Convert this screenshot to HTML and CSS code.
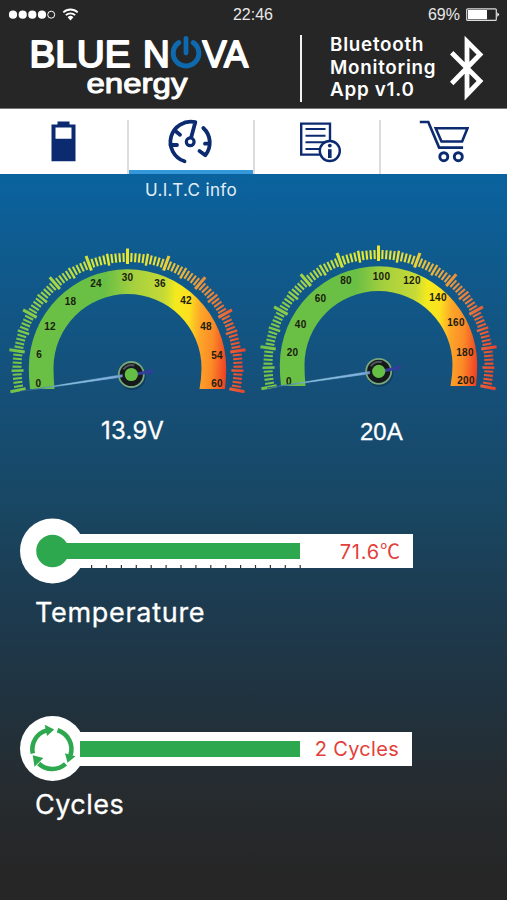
FILE: index.html
```
<!DOCTYPE html>
<html lang="en">
<head>
    <meta charset="UTF-8">
    <meta name="viewport" content="width=device-width, initial-scale=1.0">
    <title>Blue Nova Energy</title>
    <link rel="stylesheet" href="styles.css">
</head>
<body>
    <header class="header">
        <div class="status">
            <svg class="signal" width="72" height="16" viewBox="8 7 72 16">
                <g fill="#fff">
                    <circle cx="13" cy="14.7" r="4.1"/>
                    <circle cx="22.7" cy="14.7" r="4.1"/>
                    <circle cx="32.3" cy="14.7" r="4.1"/>
                    <circle cx="42" cy="14.7" r="4.1"/>
                    <path d="M67.6 17.2a4.2 4.2 0 0 1 5.8 0L70.5 20.4z"/>
                </g>
                <g fill="none" stroke="#fff">
                    <circle cx="51.2" cy="14.7" r="3.5" stroke-width="1"/>
                    <path d="M63.3 12.4a10.4 10.4 0 0 1 14.4 0" stroke-width="1.8"/>
                    <path d="M65.8 15.2a6.8 6.8 0 0 1 9.4 0" stroke-width="1.8"/>
                </g>
            </svg>
            <span class="time">22:46</span>
            <div class="power">
                <span>69%</span>
                <svg width="34" height="13" viewBox="466 8 34 13">
                    <rect x="466.7" y="8.8" width="29.6" height="11.6" rx="1" fill="none" stroke="#ddd" stroke-width="1.2"/>
                    <rect x="468" y="10" width="19" height="9.2" fill="#fff"/>
                    <path d="M497.3 12.3l2 2.3-2 2.3z" fill="#fff"/>
                </svg>
            </div>
        </div>
        <div class="brand">
            <svg class="logo" width="226" height="70" viewBox="26 34 226 70">
                <g class="logo-text">
                    <text class="logo-big" x="29.5" y="66.5" textLength="101" lengthAdjust="spacingAndGlyphs">BLUE</text>
                    <text class="logo-big" x="143" y="66.5">N</text>
                    <text class="logo-big" x="202.5" y="66.5" textLength="45.5" lengthAdjust="spacingAndGlyphs">VA</text>
                    <text class="logo-small" x="86.5" y="92.8" textLength="101" lengthAdjust="spacingAndGlyphs">energy</text>
                </g>
                <g fill="none" stroke="#0e69ae" stroke-linecap="round">
                    <path d="M178.7 42.6a12.8 12.8 0 1 0 14.6 0" stroke-width="5"/>
                    <path d="M186 38.5V53" stroke-width="4.8"/>
                </g>
            </svg>
            <div class="divider"></div>
            <div class="app-name">Bluetooth<br>Monitoring<br>App v1.0</div>
            <svg class="bluetooth" width="40" height="68" viewBox="0 0 40 68">
                <path d="M2.7 18.7L31 47L18 60.5V7.5L31 20.5L2.7 49.5" fill="none" stroke="#fff" stroke-width="4.8" stroke-miterlimit="6"/>
            </svg>
        </div>
    </header>

    <nav class="tabs">
        <a class="tab">
            <svg width="50" height="50" viewBox="38.5 116 50 50">
                <path d="M57 121.5h12v3h6v36.8H51v-36.8h6zM55 127.5v11.2h16v-11.2z" fill="#0b2a6f" fill-rule="evenodd"/>
            </svg>
        </a>
        <a class="tab active">
            <svg width="50" height="50" viewBox="166.5 116 50 50" fill="none" stroke="#0b2a6f" stroke-width="3.8" stroke-linecap="round" stroke-linejoin="round">
                <path d="M185 161.3A20.3 20.3 0 0 1 195.8 122.2L191.8 137"/>
                <path d="M203.8 128A20 20 0 0 1 205.8 155.3L200 151"/>
                <path d="M176.5 131.5l4 3.2M171 145h6.5M205.5 143.7h4"/>
                <circle cx="190.7" cy="141.8" r="3.9" stroke-width="3.2"/>
            </svg>
        </a>
        <a class="tab">
            <svg width="50" height="50" viewBox="292 116 50 50" fill="none" stroke="#0b2a6f" stroke-width="2.4">
                <path d="M301.2 123.6h28.8v31h-28.8z"/>
                <path d="M305.5 129h20M305.5 135.7h20M305.5 142.3h20M305.5 149h14" stroke-width="2.1"/>
                <circle cx="329.8" cy="151" r="10" fill="#fff"/>
                <circle cx="329.8" cy="145.6" r="1.9" fill="#0b2a6f" stroke="none"/>
                <path d="M329.8 149.2v8.8" stroke-width="3.6"/>
            </svg>
        </a>
        <a class="tab">
            <svg width="50" height="50" viewBox="418.5 116 50 50" fill="none" stroke="#0b2a6f" stroke-width="2.6">
                <path d="M419.3 122h8.5l10.8 25.6h24"/>
                <path d="M435.2 128.2h31.8l-5.4 13.3h-20.6z"/>
                <circle cx="443.3" cy="156.7" r="4" stroke-width="2.9"/>
                <circle cx="457.8" cy="156.7" r="4" stroke-width="2.9"/>
            </svg>
        </a>
    </nav>

    <main class="content">
        <div class="tab-title">U.I.T.C info</div>

        <div class="gauges">
            <div class="gauge">
                <svg id="voltGauge" width="253" height="160" viewBox="0 0 253 160"></svg>
                <div class="reading volts">13.9V</div>
            </div>
            <div class="gauge">
                <svg id="ampGauge" width="253" height="160" viewBox="0 0 253 160"></svg>
                <div class="reading amps">20A</div>
            </div>
        </div>

        <section class="meter temperature">
            <div class="meter-row">
                <svg class="knob" width="66" height="66" viewBox="0 0 66 66">
                    <circle cx="32.5" cy="33" r="32.5" fill="#fff"/>
                    <circle cx="32.5" cy="33" r="16.3" fill="#2ea84f"/>
                    <path d="M33 25h33v16H33z" fill="#2ea84f"/>
                </svg>
                <div class="track">
                    <div class="fill"></div>
                    <div class="meter-value">71.6<span class="unit">℃</span></div>
                    <svg class="scale" width="212" height="3" viewBox="0 0 212 3">
                        <path d="M1 1.5H212" stroke="#333" stroke-width="3" stroke-dasharray="1.2 13.7"/>
                    </svg>
                </div>
            </div>
            <h2>Temperature</h2>
        </section>

        <section class="meter cycles">
            <div class="meter-row">
                <svg class="knob" width="66" height="66" viewBox="0 0 66 66">
                    <circle cx="32.5" cy="32.5" r="32.5" fill="#fff"/>
                    <g transform="translate(-.8 -.3)">
                        <g fill="none" stroke="#2ea84f" stroke-width="4.6">
                            <path d="M13.6 37.7A19.6 19.6 0 0 1 27.5 14.7"/>
                            <path d="M38.3 14.5A19.6 19.6 0 0 1 51.2 39.5"/>
                            <path d="M46.3 48.2A19.6 19.6 0 0 1 19.5 47.8"/>
                        </g>
                        <path d="M25.5 9L35 13.8L27.8 20.4zM45.8 37.6L56.3 40.5L48.3 47zM13.5 39.5L24.2 42.2L15.3 51z" fill="#2ea84f"/>
                    </g>
                    <path d="M60 25h6v16h-6z" fill="#2ea84f"/>
                </svg>
                <div class="track">
                    <div class="fill"></div>
                    <div class="meter-value">2 Cycles</div>
                </div>
            </div>
            <h2>Cycles</h2>
        </section>
    </main>

    <script>
        function polar(cx, cy, r, deg) {
            const a = deg * Math.PI / 180;
            return (cx + r * Math.sin(a)).toFixed(2) + ' ' + (cy - r * Math.cos(a)).toFixed(2);
        }

        function drawGauge(id, g) {
            const { cx, cy, hub, needle, labels } = g;
            const bottom = cy + 21;
            let out = `<defs>
                <linearGradient id="${id}Band" gradientUnits="userSpaceOnUse" x1="${cx - 99}" y1="${cy}" x2="${cx + 99}" y2="${cy + 12}">
                    <stop offset="0" stop-color="#6abf45"/>
                    <stop offset=".36" stop-color="#6abf45"/>
                    <stop offset=".5" stop-color="#a5d03e"/>
                    <stop offset=".66" stop-color="#c6da36"/>
                    <stop offset=".72" stop-color="#f3ea1e"/>
                    <stop offset=".79" stop-color="#fce01f"/>
                    <stop offset=".85" stop-color="#fda728"/>
                    <stop offset=".92" stop-color="#fb8a27"/>
                    <stop offset="1" stop-color="#ef3a25"/>
                </linearGradient>
                <linearGradient id="${id}Ticks" gradientUnits="userSpaceOnUse" x1="${cx - 119}" y1="0" x2="${cx + 119}" y2="0">
                    <stop offset="0" stop-color="#6cc04a"/>
                    <stop offset=".2" stop-color="#a9d546"/>
                    <stop offset=".42" stop-color="#e9ea2c"/>
                    <stop offset=".62" stop-color="#ecdf36"/>
                    <stop offset=".78" stop-color="#eea03a"/>
                    <stop offset=".9" stop-color="#e8703a"/>
                    <stop offset="1" stop-color="#e8402c"/>
                </linearGradient>
            </defs>`;

            out += `<path d="M${cx - 97.5} ${bottom}Q${cx - 98.7} ${cy + 10} ${cx - 98.7} ${cy}A98.7 98.7 0 0 1 ${cx + 98.7} ${cy}
                Q${cx + 98.7} ${cy + 10} ${cx + 97.5} ${bottom}H${cx + 72}Q${cx + 74} ${cy + 10} ${cx + 74} ${cy}
                A74 74 0 0 0 ${cx - 74} ${cy}Q${cx - 74} ${cy + 10} ${cx - 73} ${bottom}z" fill="url(#${id}Band)"/>`;

            // long tick every 10, medium every 5
            let major = '', medium = '', minor = '';
            for (let i = -50; i <= 50; i++) {
                const deg = i * 2.03;
                if (i % 10 === 0) {
                    major += `M${polar(cx, cy, 104, deg)}L${polar(cx, cy, 119.5, deg)}`;
                } else if (i % 5 === 0) {
                    medium += `M${polar(cx, cy, 104, deg)}L${polar(cx, cy, 116, deg)}`;
                } else {
                    minor += `M${polar(cx, cy, 106, deg)}L${polar(cx, cy, 115, deg)}`;
                }
            }
            out += `<g fill="none" stroke="url(#${id}Ticks)">
                <path d="${major}" stroke-width="3"/>
                <path d="${medium}" stroke-width="2.4"/>
                <path d="${minor}" stroke-width="2.1"/>
            </g>`;

            labels.forEach(([text, x, y]) => {
                out += `<text class="gauge-label" x="${x}" y="${y + 3.6}">${text}</text>`;
            });

            out += `<defs><linearGradient id="${id}Needle" gradientUnits="userSpaceOnUse" x1="${needle[0]}" y1="0" x2="${needle[2]}" y2="0">
                    <stop offset="0" stop-color="#1c4f7f"/>
                    <stop offset=".35" stop-color="#8cc3e2"/>
                    <stop offset=".7" stop-color="#7fb0dc"/>
                    <stop offset="1" stop-color="#30358f"/>
                </linearGradient></defs>
                <circle cx="${hub[0] + 1}" cy="${hub[1] + 2}" r="13.5" fill="#0b2c45" opacity=".5"/>
                <circle cx="${hub[0]}" cy="${hub[1]}" r="12.5" fill="#15191b" stroke="#79a77d" stroke-width="1.8"/>
                <path d="M${hub[0] - 8} ${hub[1] - 5}A9.4 9.4 0 0 1 ${hub[0] + 3} ${hub[1] - 9}" fill="none" stroke="#50565b" stroke-width="2"/>
                <path d="M${needle[0]} ${needle[1]}L${hub[0] - 9} ${hub[1] + .2}L${hub[0] - 9} ${hub[1] + 2.4}z" fill="url(#${id}Needle)" stroke="url(#${id}Needle)" stroke-width=".6"/>
                <path d="M${hub[0] + 5} ${hub[1] - .6}L${needle[2]} ${needle[3]}" stroke="#343c9c" stroke-width="3"/>
                <path d="M${needle[2] - 3} ${needle[3] - 2.5}v6" stroke="#343c9c" stroke-width="1.2"/>
                <circle cx="${hub[0]}" cy="${hub[1]}" r="6.6" fill="#66bf45"/>`;

            document.getElementById(id).innerHTML = out;
        }

        drawGauge('voltGauge', {
            cx: 127.5, cy: 128, hub: [131.3, 134.5], needle: [20, 151.5, 153, 131.3],
            labels: [[0, 38.5, 143.5], [6, 39.3, 114.5], [12, 50, 86], [18, 70.5, 61], [24, 96, 43],
                [30, 127.5, 37], [36, 160, 43], [42, 186, 60.5], [48, 206, 86], [54, 217, 115], [60, 217, 143.5]]
        });
        drawGauge('ampGauge', {
            cx: 125.5, cy: 125, hub: [125.7, 131.3], needle: [14, 148, 148, 127.3],
            labels: [[0, 36, 141], [20, 39.5, 112], [40, 47.7, 84], [60, 67.5, 58], [80, 93, 40.5],
                [100, 128.5, 36], [120, 159, 40], [140, 185, 57], [160, 203, 82.5], [180, 212, 112], [200, 213, 140.5]]
        });
    </script>
</body>
</html>
```
FILE: styles.css
```
* {
    box-sizing: border-box;
}
body {
    margin: 0;
    width: 507px;
    height: 900px;
    overflow: hidden;
    font-family: "Liberation Sans", Arial, sans-serif;
    color: #fff;
    background: #262626;
}
svg {
    display: block;
}
.header {
    height: 109px;
    background: #262626;
    border-bottom: 1px solid #777;
}
.status {
    display: grid;
    grid-template-columns: 1fr auto 1fr;
    align-items: center;
    height: 30px;
    padding: 0 7px 0 8px;
    font-size: 16px;
    color: #e8e8e8;
}
.time {
    margin-right: 2px;
}
.power {
    display: flex;
    justify-content: flex-end;
    align-items: center;
    gap: 6px;
}
.power svg {
    margin-bottom: 1px;
}
.brand {
    display: flex;
    padding: 4px 0 0 26px;
}
.logo-text {
    fill: #fff;
    stroke: #fff;
    stroke-linejoin: round;
}
.logo-big {
    font-size: 37px;
    stroke-width: 1.9px;
}
.logo-small {
    font-size: 27px;
    stroke-width: 1px;
}
.divider {
    width: 2px;
    height: 67px;
    margin: 1px 0 0 48px;
    background: #f2f2f2;
}
.app-name {
    width: 119px;
    margin-left: 28px;
    font-family: Inter, sans-serif;
    font-size: 18.8px;
    font-weight: 600;
    line-height: 22.5px;
    letter-spacing: 0.75px;
    white-space: nowrap;
}
.tabs {
    display: grid;
    grid-template-columns: 129px 126px 126px 126px;
    height: 65px;
    background: #fff;
}
.tab {
    display: flex;
    justify-content: center;
    padding-top: 7px;
    border-right: 2px solid;
    border-image: linear-gradient(#fff 11px, #dcdcdc 11px) 0 2 0 0;
}
.tab:last-child {
    border: none;
}
.tab.active {
    background: linear-gradient(#3498db, #3498db) bottom / 100% 4px no-repeat;
}
.content {
    height: 726px;
    background: linear-gradient(#0a639f 0, #0f5b8e 80px, #154f78 220px, #184763 330px, #1d3b50 430px, #20323e 530px, #262c30 610px, #262626 700px);
}
.tab-title {
    height: 66px;
    padding: 5px 0 0 145px;
    font-family: Inter, sans-serif;
    font-size: 17px;
    line-height: 22px;
    letter-spacing: 0.35px;
    color: #e3eef6;
}
.gauges {
    display: grid;
    grid-template-columns: 253px 254px;
    height: 244px;
}
.gauge-label {
    font-size: 10px;
    font-weight: bold;
    letter-spacing: 0.3px;
    text-anchor: middle;
    fill: #1a200f;
}
.reading {
    padding-top: 16px;
    font-size: 24px;
    line-height: 28px;
    -webkit-text-stroke: 0.3px #fff;
}
.volts {
    padding: 17px 0 0 101px;
    font-family: Inter, sans-serif;
    letter-spacing: 0.2px;
}
.amps {
    padding: 18px 0 0 107px;
}
.meter {
    height: 198px;
    padding: 34px 0 0 20px;
}
.meter-row {
    display: flex;
    align-items: center;
}
.knob {
    flex: none;
    z-index: 1;
}
.track {
    position: relative;
    display: flex;
    align-items: center;
    justify-content: space-between;
    width: 353px;
    height: 34px;
    margin-left: -26px;
    padding: 0 13px 0 20px;
    background: #fff;
}
.fill {
    width: 220px;
    height: 16px;
    background: #2ea84f;
}
.meter-value {
    font-family: Inter, sans-serif;
    font-size: 20px;
    line-height: 24px;
    letter-spacing: 0.3px;
    color: #e3403a;
    white-space: nowrap;
}
.temperature .meter-value {
    letter-spacing: 0.8px;
}
.unit {
    letter-spacing: 0;
    font-family: "Noto Sans CJK SC", sans-serif;
}
.scale {
    position: absolute;
    left: 30px;
    bottom: 0;
}
h2 {
    margin: 13px 0 0 15px;
    font-family: Inter, sans-serif;
    font-size: 27px;
    font-weight: normal;
    line-height: 32px;
    letter-spacing: 0.7px;
    -webkit-text-stroke: 0.3px #fff;
}
.cycles .track {
    width: 352px;
}
.cycles h2 {
    margin-top: 7px;
    letter-spacing: 0.5px;
}
```
